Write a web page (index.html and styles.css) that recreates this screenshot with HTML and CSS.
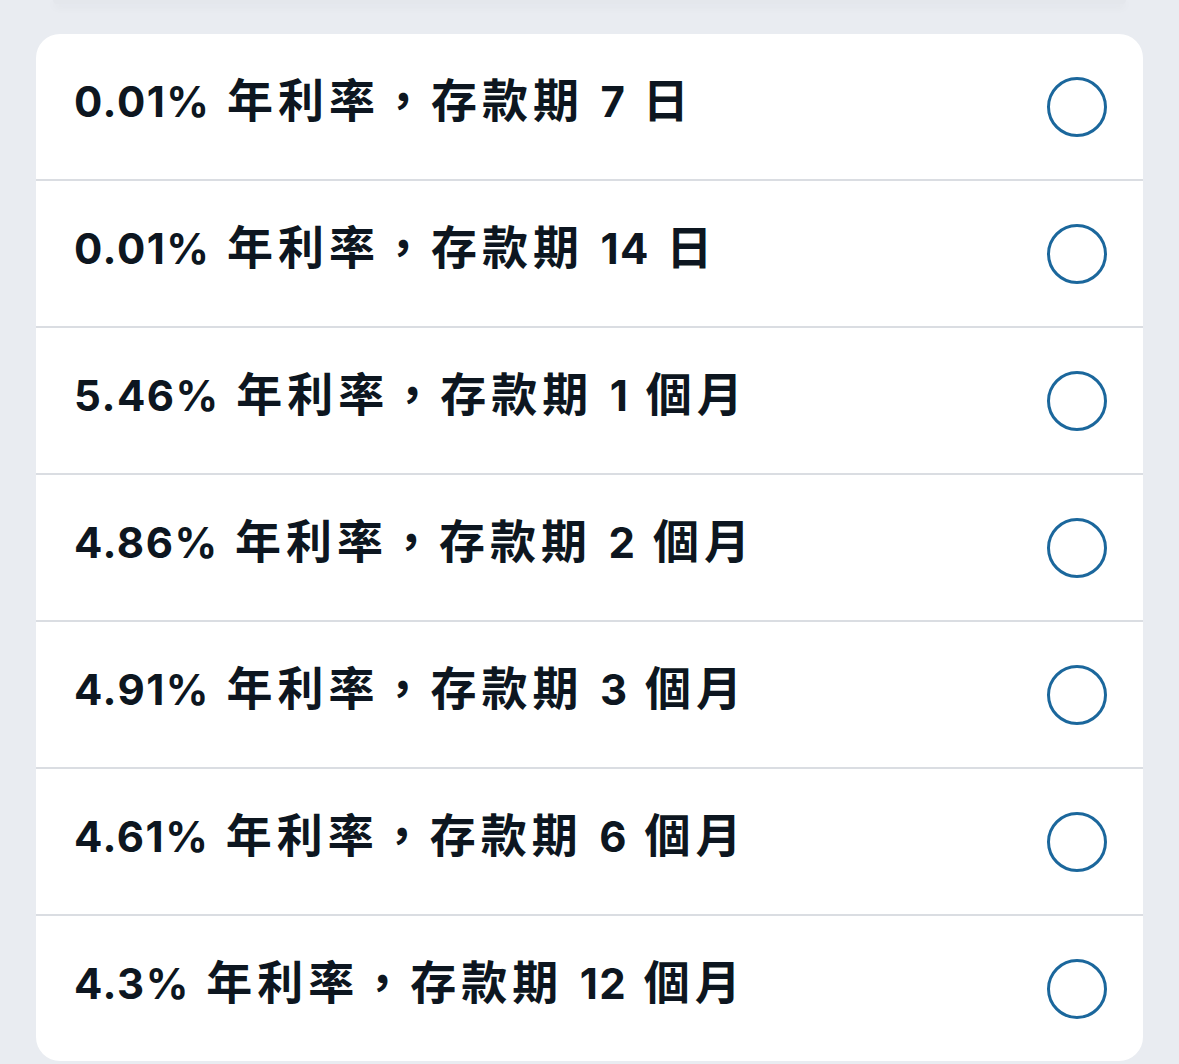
FILE: index.html
```html
<!DOCTYPE html>
<html lang="zh-Hant">
<head>
<meta charset="utf-8">
<link rel="stylesheet" href="styles.css">
</head>
<body>
<div class="prev-card"></div>
<div class="card">
  <div class="row"><span class="label"><span class="num">0.01%</span> 年利率，存款期 <span class="num">7</span> 日</span><span class="radio"></span></div>
  <div class="row"><span class="label"><span class="num">0.01%</span> 年利率，存款期 <span class="num">14</span> 日</span><span class="radio"></span></div>
  <div class="row"><span class="label"><span class="num">5.46%</span> 年利率，存款期 <span class="num">1</span> 個月</span><span class="radio"></span></div>
  <div class="row"><span class="label"><span class="num">4.86%</span> 年利率，存款期 <span class="num">2</span> 個月</span><span class="radio"></span></div>
  <div class="row"><span class="label"><span class="num">4.91%</span> 年利率，存款期 <span class="num">3</span> 個月</span><span class="radio"></span></div>
  <div class="row"><span class="label"><span class="num">4.61%</span> 年利率，存款期 <span class="num">6</span> 個月</span><span class="radio"></span></div>
  <div class="row"><span class="label"><span class="num">4.3%</span> 年利率，存款期 <span class="num">12</span> 個月</span><span class="radio"></span></div>
</div>
</body>
</html>
```
FILE: styles.css
```css
html, body {
  margin: 0;
  padding: 0;
  background: #e9ecf1;
}
body {
  width: 1179px;
  height: 1064px;
  overflow: hidden;
  font-family: "Noto Sans CJK TC", sans-serif;
}
.prev-card {
  height: 4px;
  margin: 0 53px 0 53px;
  background: #e4e7ec;
  border-radius: 0 0 16px 16px;
  box-shadow: 0 3px 8px rgba(30, 40, 60, 0.05);
}
.card {
  margin: 30px 36px 0 36px;
  background: #ffffff;
  border-radius: 24px;
  overflow: hidden;
}
.row {
  display: flex;
  align-items: center;
  justify-content: space-between;
  height: 145px;
  padding: 0 36px 0 38px;
  border-bottom: 2px solid #dadde2;
}
.row:last-child {
  border-bottom: none;
}
.label {
  font-size: 46px;
  line-height: 60px;
  font-weight: 700;
  color: #0d1620;
  letter-spacing: 5px;
  word-spacing: 1px;
  white-space: nowrap;
  padding-bottom: 14px;
}
.num {
  font-family: "Inter", "Noto Sans", sans-serif;
  font-size: 42px;
  font-weight: 700;
  letter-spacing: 1.5px;
  word-spacing: 0;
}
.radio {
  width: 54px;
  height: 54px;
  border: 3px solid #1b679c;
  border-radius: 50%;
  flex: none;
}
```
